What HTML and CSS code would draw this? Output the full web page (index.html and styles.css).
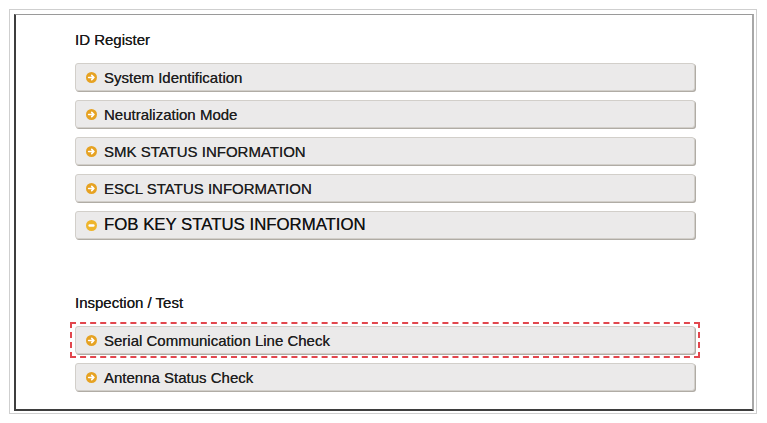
FILE: index.html
```html
<!DOCTYPE html>
<html>
<head>
<meta charset="utf-8">
<link rel="stylesheet" href="styles.css">
</head>
<body>
<div class="frame">
  <div class="panel">
    <div class="section">
      <div class="heading">ID Register</div>
      <div class="list">
        <div class="btn"><svg class="ico" viewBox="0 0 10 10"><circle cx="5" cy="5" r="5" fill="#e6a222"/><path d="M2.4 5H7.2M5.2 3L7.2 5L5.2 7" stroke="#fff" stroke-width="1.5" fill="none" stroke-linecap="round" stroke-linejoin="round"/></svg><span>System Identification</span></div>
        <div class="btn"><svg class="ico" viewBox="0 0 10 10"><circle cx="5" cy="5" r="5" fill="#e6a222"/><path d="M2.4 5H7.2M5.2 3L7.2 5L5.2 7" stroke="#fff" stroke-width="1.5" fill="none" stroke-linecap="round" stroke-linejoin="round"/></svg><span>Neutralization Mode</span></div>
        <div class="btn"><svg class="ico" viewBox="0 0 10 10"><circle cx="5" cy="5" r="5" fill="#e6a222"/><path d="M2.4 5H7.2M5.2 3L7.2 5L5.2 7" stroke="#fff" stroke-width="1.5" fill="none" stroke-linecap="round" stroke-linejoin="round"/></svg><span>SMK STATUS INFORMATION</span></div>
        <div class="btn"><svg class="ico" viewBox="0 0 10 10"><circle cx="5" cy="5" r="5" fill="#e6a222"/><path d="M2.4 5H7.2M5.2 3L7.2 5L5.2 7" stroke="#fff" stroke-width="1.5" fill="none" stroke-linecap="round" stroke-linejoin="round"/></svg><span>ESCL STATUS INFORMATION</span></div>
        <div class="btn btn-large"><svg class="ico ico-large" viewBox="0 0 10 10"><circle cx="5" cy="5" r="5" fill="#eeb52c"/><rect x="2.2" y="3.9" width="5.6" height="2.2" rx="1.1" fill="#fff"/></svg><span>FOB KEY STATUS INFORMATION</span></div>
      </div>
    </div>
    <div class="section section-test">
      <div class="heading">Inspection / Test</div>
      <div class="list list-test">
        <div class="highlight">
          <div class="btn"><svg class="ico" viewBox="0 0 10 10"><circle cx="5" cy="5" r="5" fill="#e6a222"/><path d="M2.4 5H7.2M5.2 3L7.2 5L5.2 7" stroke="#fff" stroke-width="1.5" fill="none" stroke-linecap="round" stroke-linejoin="round"/></svg><span>Serial Communication Line Check</span></div>
        </div>
        <div class="btn"><svg class="ico" viewBox="0 0 10 10"><circle cx="5" cy="5" r="5" fill="#e6a222"/><path d="M2.4 5H7.2M5.2 3L7.2 5L5.2 7" stroke="#fff" stroke-width="1.5" fill="none" stroke-linecap="round" stroke-linejoin="round"/></svg><span>Antenna Status Check</span></div>
      </div>
    </div>
  </div>
</div>
</body>
</html>
```
FILE: styles.css
```css
html, body {
  margin: 0;
  padding: 0;
  background: #ffffff;
}
body {
  font-family: "Liberation Sans", Arial, sans-serif;
  color: #222;
  width: 767px;
  height: 423px;
  overflow: hidden;
}
.frame {
  margin: 9px 0 0 9px;
  width: 748px;
  height: 405px;
  box-sizing: border-box;
  border: 1px solid #cfcfcf;
  padding: 4px 2px 2px 4px;
}
.panel {
  box-sizing: border-box;
  height: 397px;
  border-left: 2px solid #3e3e3e;
  border-top: 1px solid #9a9a9a;
  border-right: 2px solid #a8a8a8;
  border-bottom: 2px solid #3e3e3e;
  padding: 16px 0 0 59px;
  display: flex;
  flex-direction: column;
}
.heading {
  font-size: 15px;
  line-height: 18px;
  color: #1a1a1a;
  text-shadow: 0 0 0.5px #333;
}
.list {
  display: flex;
  flex-direction: column;
  gap: 9px;
  margin-top: 14px;
  width: 620px;
}
.section-test {
  margin-top: 55px;
}
.list-test {
  margin-top: 10px;
  margin-left: -5px;
  width: 630px;
  gap: 5px;
}
.list-test > .btn {
  margin-left: 5px;
  width: 620px;
}
.btn {
  box-sizing: border-box;
  height: 28px;
  display: flex;
  align-items: center;
  gap: 7px;
  padding-left: 10px;
  background: #ebeaea;
  border: 1px solid #d2cfca;
  border-radius: 3px;
  box-shadow: 1px 1px 0 #b0aca5;
  font-size: 15px;
  color: #1e1e1e;
  text-shadow: 0 0 0.5px #444;
}
.btn-large {
  font-size: 16.8px;
  color: #111;
}
.ico {
  width: 11px;
  height: 11px;
  flex: none;
}
.ico-large {
  width: 11px;
  height: 11px;
}
.highlight {
  border: 2px dashed #e2474e;
  padding: 2px 3px;
}
```
